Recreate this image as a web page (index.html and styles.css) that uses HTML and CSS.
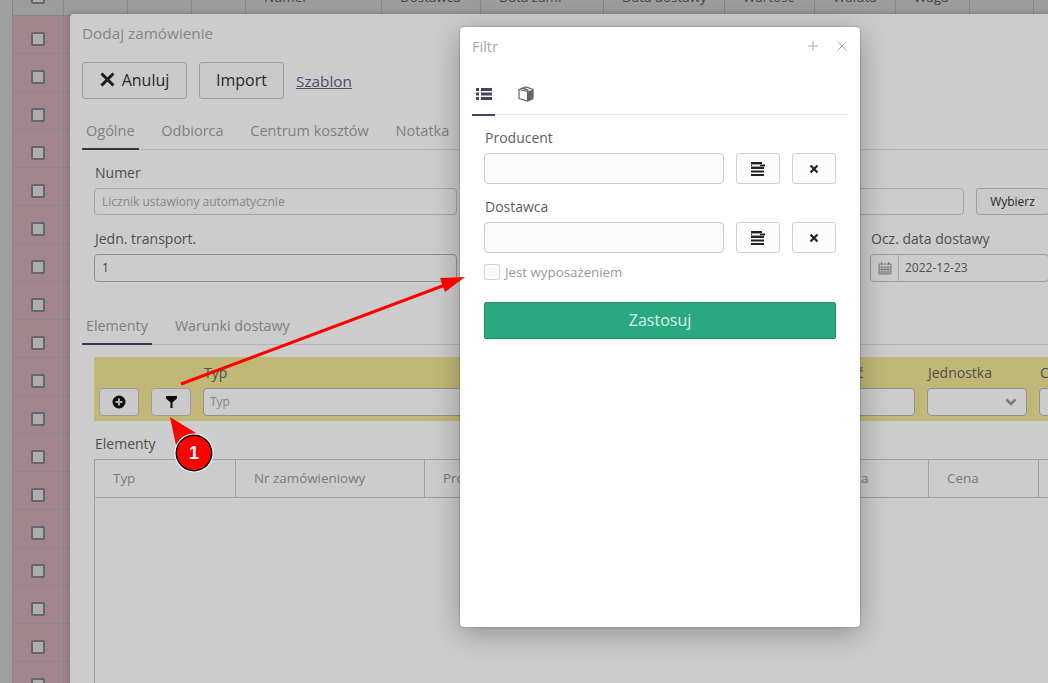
FILE: index.html
```html
<!DOCTYPE html>
<html lang="pl">
  <head>
    <meta charset="UTF-8" />
    <meta name="viewport" content="width=device-width, initial-scale=1.0" />
    <title>Filtr</title>
    <link rel="stylesheet" href="styles.css">
  </head>

  <body>
    <div class="list">
      <div class="list-row list-head">
        <div class="list-cell"><span class="check"></span></div>
        <div class="list-cell"></div>
        <div class="list-cell"></div>
        <div class="list-cell"></div>
        <div class="list-cell">Numer</div>
        <div class="list-cell">Dostawca</div>
        <div class="list-cell">Data zam.</div>
        <div class="list-cell">Data dostawy</div>
        <div class="list-cell">Wartość</div>
        <div class="list-cell">Waluta</div>
        <div class="list-cell">Waga</div>
        <div class="list-cell"></div>
        <div class="list-cell"></div>
      </div>
      <div class="list-row"><div class="list-cell"><span class="check"></span></div><div class="list-cell"></div></div>
      <div class="list-row"><div class="list-cell"><span class="check"></span></div><div class="list-cell"></div></div>
      <div class="list-row"><div class="list-cell"><span class="check"></span></div><div class="list-cell"></div></div>
      <div class="list-row"><div class="list-cell"><span class="check"></span></div><div class="list-cell"></div></div>
      <div class="list-row"><div class="list-cell"><span class="check"></span></div><div class="list-cell"></div></div>
      <div class="list-row"><div class="list-cell"><span class="check"></span></div><div class="list-cell"></div></div>
      <div class="list-row"><div class="list-cell"><span class="check"></span></div><div class="list-cell"></div></div>
      <div class="list-row"><div class="list-cell"><span class="check"></span></div><div class="list-cell"></div></div>
      <div class="list-row"><div class="list-cell"><span class="check"></span></div><div class="list-cell"></div></div>
      <div class="list-row"><div class="list-cell"><span class="check"></span></div><div class="list-cell"></div></div>
      <div class="list-row"><div class="list-cell"><span class="check"></span></div><div class="list-cell"></div></div>
      <div class="list-row"><div class="list-cell"><span class="check"></span></div><div class="list-cell"></div></div>
      <div class="list-row"><div class="list-cell"><span class="check"></span></div><div class="list-cell"></div></div>
      <div class="list-row"><div class="list-cell"><span class="check"></span></div><div class="list-cell"></div></div>
      <div class="list-row"><div class="list-cell"><span class="check"></span></div><div class="list-cell"></div></div>
      <div class="list-row"><div class="list-cell"><span class="check"></span></div><div class="list-cell"></div></div>
      <div class="list-row"><div class="list-cell"><span class="check"></span></div><div class="list-cell"></div></div>
      <div class="list-row"><div class="list-cell"><span class="check"></span></div><div class="list-cell"></div></div>
    </div>

    <div class="order">
      <div class="order-title">Dodaj zamówienie</div>
      <div class="toolbar">
        <button class="btn btn-cancel">
          <svg width="15" height="15" viewBox="0 0 15 15"><path d="M1.500 1.500l12 12M13.500 1.500l-12 12" stroke="#222" stroke-width="3" fill="none"/></svg>
          Anuluj
        </button>
        <button class="btn btn-import">Import</button>
        <a class="link">Szablon</a>
      </div>

      <div class="tabs">
        <div class="tab active">Ogólne</div>
        <div class="tab">Odbiorca</div>
        <div class="tab">Centrum kosztów</div>
        <div class="tab">Notatka</div>
      </div>

      <div class="form">
        <div class="form-row">
          <div class="field field-number">
            <label>Numer</label>
            <div class="input placeholder">Licznik ustawiony automatycznie</div>
          </div>
          <div class="field field-grow">
            <label>&nbsp;</label>
            <div class="input"></div>
          </div>
          <div class="field">
            <label>&nbsp;</label>
            <button class="btn-pick">Wybierz</button>
          </div>
        </div>
        <div class="form-row">
          <div class="field field-number">
            <label>Jedn. transport.</label>
            <div class="input tall">1</div>
          </div>
          <div class="field field-grow"></div>
          <div class="field field-date">
            <label>Ocz. data dostawy</label>
            <div class="date-group">
              <span class="date-addon">
                <svg width="14" height="14" viewBox="0 0 14 14"><path d="M1 3h12v10H1zM1 6h12M4 6v7M7 6v7M10 6v7M1 8.500h12M1 11h12M3.500 1v3M10.500 1v3" stroke="#999" stroke-width="1" fill="none"/></svg>
              </span>
              <span class="date-value">2022-12-23</span>
            </div>
          </div>
        </div>
      </div>

      <div class="tabs tabs-second">
        <div class="tab active">Elementy</div>
        <div class="tab">Warunki dostawy</div>
      </div>

      <div class="band">
        <button class="btn-icon">
          <svg width="14" height="14" viewBox="0 0 14 14"><circle cx="7" cy="7" r="6.500" fill="#111"/><path d="M7 3.500v7M3.500 7h7" stroke="#ddd" stroke-width="2"/></svg>
        </button>
        <button class="btn-icon">
          <svg width="11" height="12" viewBox="0 0 11 12"><path d="M0 0h11v2.500L6.500 6.500V12h-2V6.500L0 2.500z" fill="#111"/></svg>
        </button>
        <div class="band-field band-type">
          <label>Typ</label>
          <div class="input tall placeholder">Typ</div>
        </div>
        <div class="band-field band-qty">
          <label>Ilość</label>
          <div class="input tall"></div>
        </div>
        <div class="band-field band-unit">
          <label>Jednostka</label>
          <div class="input tall select">
            <svg width="12" height="8" viewBox="0 0 12 8"><path d="M1.500 1.500L6 6l4.500-4.500" stroke="#999" stroke-width="2.500" fill="none"/></svg>
          </div>
        </div>
        <div class="band-field band-price">
          <label>Cena</label>
          <div class="input tall"></div>
        </div>
      </div>

      <div class="section-label">Elementy</div>
      <div class="grid">
        <div class="grid-head">
          <div class="grid-cell col-type">Typ</div>
          <div class="grid-cell col-order">Nr zamówieniowy</div>
          <div class="grid-cell col-producer">Producent</div>
          <div class="grid-cell col-date">Data</div>
          <div class="grid-cell col-price">Cena</div>
          <div class="grid-cell"></div>
        </div>
      </div>
    </div>

    <div class="overlay"></div>

    <div class="modal">
      <div class="modal-head">
        <span class="modal-title">Filtr</span>
        <svg width="12" height="12" viewBox="0 0 12 12"><path d="M6 1v10M1 6h10" stroke="#aaa" stroke-width="1" fill="none"/></svg>
        <svg width="12" height="12" viewBox="0 0 12 12"><path d="M1.500 1.500l9 9M10.500 1.500l-9 9" stroke="#aaa" stroke-width="1" fill="none"/></svg>
      </div>
      <div class="modal-tabs">
        <div class="modal-tab active">
          <svg width="16" height="12" viewBox="0 0 16 12"><path d="M0 0h3v3H0zM5 0h11v3H5zM0 4.500h3v3H0zM5 4.500h11v3H5zM0 9h3v3H0zM5 9h11v3H5z" fill="#45435f"/></svg>
        </div>
        <div class="modal-tab">
          <svg width="16" height="16" viewBox="0 0 16 16"><path d="M1 3.500L8 1l7 2.500v9L9.500 15 1 12.500z" fill="#fff" stroke="#666" stroke-width="1.200"/><path d="M9.500 5.500L15 3.500v9L9.500 15z" fill="#666"/><path d="M1 3.500l8.500 2V15" fill="none" stroke="#666" stroke-width="1.200"/><path d="M4.500 2.300l6 2" stroke="#666" stroke-width="1.500"/></svg>
        </div>
      </div>
      <div class="modal-body">
        <label class="modal-label">Producent</label>
        <div class="picker">
          <div class="picker-input"></div>
          <button class="picker-btn">
            <svg width="15" height="16" viewBox="0 0 15 16"><path d="M0 1h11v2H0zM0 13h13v2H0zM0 9.500h13v2H0zM0 6h13v2H0z" fill="#222"/><path d="M0 3.500h14v2H0z" fill="#222"/><path d="M1 3.800h8v1.400H1z" fill="#eee"/></svg>
          </button>
          <button class="picker-btn">
            <svg width="10" height="10" viewBox="0 0 10 10"><path d="M1.500 1.500l7 7M8.500 1.500l-7 7" stroke="#222" stroke-width="2.200" fill="none"/></svg>
          </button>
        </div>
        <label class="modal-label">Dostawca</label>
        <div class="picker">
          <div class="picker-input"></div>
          <button class="picker-btn">
            <svg width="15" height="16" viewBox="0 0 15 16"><path d="M0 1h11v2H0zM0 13h13v2H0zM0 9.500h13v2H0zM0 6h13v2H0z" fill="#222"/><path d="M0 3.500h14v2H0z" fill="#222"/><path d="M1 3.800h8v1.400H1z" fill="#eee"/></svg>
          </button>
          <button class="picker-btn">
            <svg width="10" height="10" viewBox="0 0 10 10"><path d="M1.500 1.500l7 7M8.500 1.500l-7 7" stroke="#222" stroke-width="2.200" fill="none"/></svg>
          </button>
        </div>
        <div class="check-row">
          <span class="modal-check"></span>
          <span>Jest wyposażeniem</span>
        </div>
        <button class="apply">Zastosuj</button>
      </div>
    </div>

    <svg class="marks" width="1048" height="683" viewBox="0 0 1048 683">
      <path d="M181 384L445 285" stroke="#f00" stroke-width="3" fill="none"/>
      <path d="M465 277L440 278L445 292z" fill="#f00"/>
      <path d="M170 417L196 433L176 445z" fill="#f00"/>
      <circle cx="194" cy="453" r="19.500" fill="#fff"/>
      <circle cx="194" cy="453" r="18.500" fill="#000"/>
      <circle cx="194" cy="453" r="17" fill="#f00"/>
    </svg>
    <div class="badge">1</div>
  </body>
</html>
```

FILE: styles.css
```css
body {
  margin: 0;
  width: 1048px;
  height: 683px;
  overflow: hidden;
  position: relative;
  background-color: #c8c8c8;
  font-family: "Open Sans", sans-serif;
  font-size: 14px;
  color: #646464;
}

button {
  font-family: "Open Sans", sans-serif;
  cursor: pointer;
}

/* list behind the dialogs */
.list {
  margin-top: -22px;
  margin-left: 12px;
  border-left: 1px solid #aaa;
}

.list-row {
  display: grid;
  grid-template-columns: 51px 64px 64px 54px 136px 99px 123px 121px 90px 81px 74px 64px 14px;
  height: 38px;
  box-sizing: border-box;
  border-bottom: 1px solid #aaa;
  background-color: #cba7b1;
}

.list-head {
  background-color: #c4c4c4;
}

.list-cell {
  display: flex;
  align-items: center;
  padding: 9px 0 0 18px;
  box-sizing: border-box;
  border-right: 1px solid #aaa;
  color: #555;
  font-size: 13.4px;
}

.list-head .list-cell {
  padding-top: 0;
}

.check {
  width: 10px;
  height: 10px;
  border: 2px solid #7f7f8a;
  border-radius: 2px;
  background-color: #d9d9d9;
}

/* order dialog */
.order {
  position: absolute;
  left: 70px;
  top: 14px;
  width: 1000px;
  height: 700px;
  box-sizing: border-box;
  padding: 8px 0 0 12px;
  background-color: #fff;
  border-radius: 4px;
  box-shadow: 0 0 6px rgba(0, 0, 0, 0.25);
}

.order-title {
  font-size: 15.3px;
  line-height: 22px;
  color: #aaa;
}

.toolbar {
  display: flex;
  align-items: center;
  gap: 12px;
  margin-top: 18px;
}

.btn {
  height: 37px;
  display: flex;
  align-items: center;
  justify-content: center;
  gap: 7px;
  padding: 0 0 2px;
  font-size: 16px;
  color: #333;
  background-color: #fdfdfd;
  border: 1px solid #c4c4c4;
  border-radius: 3px;
}

.btn-cancel {
  width: 105px;
}

.btn-import {
  width: 85px;
}

.link {
  font-size: 15.3px;
  color: #5f5f87;
  text-decoration: underline;
}

.tabs {
  display: flex;
  gap: 18.7px;
  margin-top: 13px;
  border-bottom: 1px solid #e0e0e0;
  height: 37px;
  font-size: 14.5px;
}

.tab {
  padding: 9px 4px 0;
  height: 38px;
  box-sizing: border-box;
  line-height: 20px;
  color: #9f9f9f;
}

.tab.active {
  border-bottom: 2px solid #45435f;
}

.tabs-second {
  margin-top: 25px;
  gap: 19px;
  font-size: 14.3px;
}

.form {
  padding: 0 21px 0 12px;
  margin-top: 13px;
}

.form-row {
  display: flex;
  margin-bottom: 14px;
  gap: 12px;
}

.field label,
.band-field label,
.section-label {
  display: block;
  line-height: 20px;
  margin: 0 0 5px 1px;
  color: #646464;
}

.field-number {
  width: 363px;
}

.field-grow {
  flex: 1;
}

.field-date {
  width: 179px;
}

.input {
  height: 27px;
  box-sizing: border-box;
  padding-left: 7px;
  line-height: 25px;
  background-color: #fff;
  border: 1px solid #d0d0d0;
  border-radius: 4px;
  font-size: 12px;
  color: #555;
}

.input.tall {
  height: 28px;
  line-height: 26px;
  border-color: #b4b4b4;
}

.placeholder {
  color: #aaa;
}

.btn-pick {
  display: block;
  width: 73px;
  height: 27px;
  padding: 0;
  font-size: 12px;
  color: #333;
  background-color: #fdfdfd;
  border: 1px solid #c8c8c8;
  border-radius: 3px;
}

.date-group {
  display: flex;
  height: 28px;
  box-sizing: border-box;
  border: 1px solid #c4c4c4;
  border-radius: 4px;
  font-size: 12px;
  line-height: 26px;
}

.date-addon {
  width: 27px;
  display: flex;
  align-items: center;
  justify-content: center;
  border-right: 1px solid #d6d6d6;
}

.date-value {
  padding-left: 6px;
}

/* yellow row */
.band {
  display: flex;
  align-items: flex-end;
  margin: 12px 0 0 12px;
  padding: 6px 0 5px 5px;
  gap: 12px;
  background-color: #f2e795;
}

.btn-icon {
  flex: none;
  width: 40px;
  height: 28px;
  padding: 0;
  display: flex;
  align-items: center;
  justify-content: center;
  background-color: #fdfdfd;
  border: 1px solid #c4c4c4;
  border-radius: 4px;
}

.band-field {
  flex: none;
}

.band-type {
  width: 617px;
}

.band-type .input {
  padding-left: 6px;
}

.band-qty {
  width: 83px;
}

.band-qty label {
  margin-left: 2px;
}

.band-unit {
  width: 100px;
}

.band-price {
  width: 40px;
}

.select {
  display: flex;
  align-items: center;
  justify-content: flex-end;
  padding-right: 9px;
}

.section-label {
  margin: 13px 0 5px 13px;
}

/* elements table */
.grid {
  margin-left: 12px;
  height: 400px;
  border: 1px solid #c8c8c8;
  border-right: 0;
}

.grid-head {
  display: flex;
  height: 38px;
  box-sizing: border-box;
  border-bottom: 1px solid #c8c8c8;
  font-size: 13.4px;
  color: #999;
}

.grid-cell {
  box-sizing: border-box;
  padding-left: 18px;
  line-height: 36px;
  border-right: 1px solid #c8c8c8;
  white-space: nowrap;
  overflow: hidden;
}

.col-type {
  width: 141px;
}

.col-order {
  width: 189px;
}

.col-producer {
  width: 200px;
}

.col-date {
  width: 304px;
  padding-left: 214px;
}

.col-price {
  width: 110px;
}

.overlay {
  position: absolute;
  inset: 0;
  background-color: rgba(0, 0, 0, 0.2);
}

/* filter modal */
.modal {
  position: absolute;
  left: 460px;
  top: 27px;
  width: 400px;
  height: 600px;
  box-sizing: border-box;
  padding: 0 12px;
  background-color: #fff;
  border-radius: 4px;
  box-shadow: 0 6px 30px rgba(0, 0, 0, 0.3), 0 0 2px rgba(0, 0, 0, 0.4);
}

.modal-head {
  display: flex;
  align-items: center;
  gap: 17px;
  height: 38px;
}

.modal-title {
  flex: 1;
  font-size: 14.5px;
  color: #aaa;
}

.modal-tabs {
  display: flex;
  margin-top: 12px;
  height: 38px;
  box-sizing: border-box;
  border-bottom: 1px solid #e6e6e6;
}

.modal-tab {
  width: 23px;
  box-sizing: border-box;
  padding: 9px 0 0 4px;
  margin-right: 19px;
}

.modal-tab.active {
  padding-top: 11px;
  height: 39px;
  border-bottom: 2px solid #45435f;
}

.modal-tab svg {
  display: block;
}

.modal-body {
  padding: 0 12px;
}

.modal-label {
  display: block;
  margin: 0 0 5px 1px;
  padding-top: 13px;
  line-height: 20px;
  color: #5e5e5e;
}

.picker {
  display: flex;
  gap: 12px;
  height: 31px;
}

.picker-input {
  width: 240px;
  box-sizing: border-box;
  background-color: #fafafa;
  border: 1px solid #ccc;
  border-radius: 4px;
}

.picker-btn {
  width: 44px;
  padding: 0;
  display: flex;
  align-items: center;
  justify-content: center;
  background-color: #fcfcfc;
  border: 1px solid #d2d2d2;
  border-radius: 3px;
}

.check-row {
  display: flex;
  align-items: center;
  gap: 5px;
  margin-top: 10px;
  height: 18px;
  font-size: 13.3px;
  color: #999;
}

.modal-check {
  width: 16px;
  height: 16px;
  box-sizing: border-box;
  background-color: #fafafa;
  border: 1px solid #d2d2d2;
  border-radius: 3px;
}

.apply {
  display: block;
  width: 352px;
  height: 37px;
  margin-top: 21px;
  padding: 0 0 2px;
  font-size: 16px;
  color: #d8f3ea;
  background-color: #2aa981;
  border: 1px solid #1f8f6b;
  border-radius: 2px;
}

/* arrows from the annotation tool */
.marks {
  position: absolute;
  left: 0;
  top: 0;
}

.badge {
  position: absolute;
  left: 176px;
  top: 435px;
  width: 36px;
  height: 36px;
  line-height: 36px;
  text-align: center;
  font-family: "Liberation Sans", sans-serif;
  font-size: 18px;
  font-weight: bold;
  color: #fff;
}
```
